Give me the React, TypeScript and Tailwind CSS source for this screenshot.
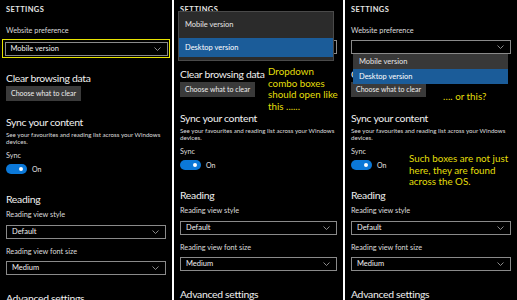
import React from "react"

const font = { fontFamily: 'Lato, "Noto Sans", sans-serif' }

function Chevron() {
  return (
    <svg width="7" height="4" viewBox="0 0 7 4" className="shrink-0">
      <path d="M0.5 0.5 L3.5 3.5 L6.5 0.5" fill="none" stroke="#9a9a9a" strokeWidth="0.9" />
    </svg>
  )
}

function Combo({ value, className = "" }: { value?: string; className?: string }) {
  return (
    <div className={`h-[14px] border border-[#8a8a8a] bg-black flex items-center justify-between pl-[5px] pr-[6px] ${className}`}>
      <span className="text-[7.5px] text-[#f0f0f0] leading-none">{value}</span>
      <Chevron />
    </div>
  )
}

function Label({ children, className = "" }: { children: React.ReactNode; className?: string }) {
  return <div className={`text-[7.3px] leading-[10px] text-[#dcdcdc] ${className}`}>{children}</div>
}

function Heading({ children, className = "" }: { children: React.ReactNode; className?: string }) {
  return <div className={`text-[10.4px] leading-[14px] tracking-[-0.3px] text-[#f0f0f0] ${className}`}>{children}</div>
}

function Note({ children, className = "" }: { children: React.ReactNode; className?: string }) {
  return <div className={`absolute text-[9.8px] leading-[11.5px] text-[#e3df0a] ${className}`}>{children}</div>
}

function Panel({ variant }: { variant: 1 | 2 | 3 }) {
  return (
    <div className="relative h-full bg-black overflow-hidden flex-1 px-[6px]">
      <div className="text-[7.5px] leading-[10px] font-bold tracking-[0.4px] text-[#e6e6e6] mt-[5px]">SETTINGS</div>
      <Label className="mt-[11px]">Website preference</Label>

      {variant === 1 ? (
        <div className="mt-[3px] -mx-[4px] border-[1.5px] border-[#e8e400] p-[1.5px]">
          <Combo value="Mobile version" />
        </div>
      ) : (
        <div className="mt-[4px] mb-[2px]">
          <Combo value={variant === 3 ? "" : "Mobile version"} />
        </div>
      )}

      <Heading className="mt-[13px]">Clear browsing data</Heading>
      <div className="mt-[1px] h-[15px] w-fit bg-[#3a3a3a] px-[5px] flex items-center text-[7px] text-[#eeeeee]">
        Choose what to clear
      </div>

      <Heading className="mt-[14px]">Sync your content</Heading>
      <div className="text-[6.2px] leading-[7px] text-[#dedede] mt-[2px]">
        See your favourites and reading list across your Windows devices.
      </div>

      <Label className="mt-[6px]">Sync</Label>
      <div className="mt-[3px] flex items-center gap-[5px]">
        <div className="w-[21px] h-[10px] rounded-full bg-[#0b78d8] flex items-center justify-end pr-[4px]">
          <div className="w-[4px] h-[4px] rounded-full bg-white" />
        </div>
        <span className="text-[7px] text-[#e6e6e6] leading-none">On</span>
      </div>

      <Heading className="mt-[18px]">Reading</Heading>
      <Label className="mt-[4px]">Reading view style</Label>
      <Combo value="Default" className="mt-[5px]" />
      <Label className="mt-[8px]">Reading view font size</Label>
      <Combo value="Medium" className="mt-[4px]" />
      <Heading className="mt-[16px]">Advanced settings</Heading>

      {variant === 2 && (
        <>
          <div className="absolute left-[4px] right-[9px] top-[11px] h-[50px] bg-[#2b2b2b] border border-[#4a4a4a] flex flex-col">
            <div className="h-[26px] flex items-center pl-[6px] text-[7.5px] text-[#e6e6e6]">Mobile version</div>
            <div className="h-[19px] flex items-center pl-[6px] bg-[#1b5c99] text-[7.5px] text-white">Desktop version</div>
          </div>
          <Note className="left-[94px] top-[66px]">
            Dropdown
            <br />
            combo boxes
            <br />
            should open like
            <br />
            this ......
          </Note>
        </>
      )}

      {variant === 3 && (
        <>
          <div className="absolute left-[8px] right-[9px] top-[54px] h-[30px] flex flex-col">
            <div className="h-[15px] flex items-center pl-[6px] bg-[#383838] text-[7.5px] text-[#e6e6e6]">Mobile version</div>
            <div className="h-[15px] flex items-center pl-[6px] bg-[#1b5c99] text-[7.5px] text-white">Desktop version</div>
          </div>
          <Note className="left-[98px] top-[91px]">…. or this?</Note>
          <Note className="left-[64px] top-[153px]">
            Such boxes are not just
            <br />
            here, they are found
            <br />
            across the OS.
          </Note>
        </>
      )}
    </div>
  )
}

export default function App() {
  return (
    <div className="w-[517px] h-[300px] bg-white flex gap-[2px] overflow-hidden" style={font}>
      <div className="w-[172px] h-full flex"><Panel variant={1} /></div>
      <div className="w-[169px] h-full flex"><Panel variant={2} /></div>
      <div className="w-[172px] h-full flex"><Panel variant={3} /></div>
    </div>
  )
}
